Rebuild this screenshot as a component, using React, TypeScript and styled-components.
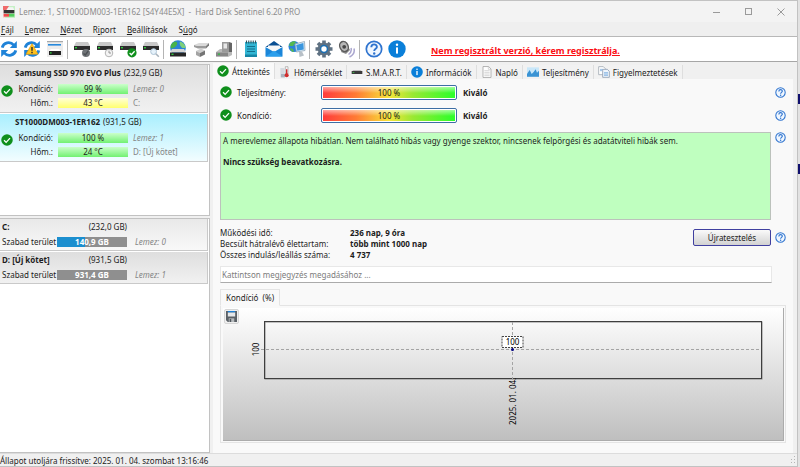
import React from "react";
import styled, { createGlobalStyle } from "styled-components";

const GlobalStyle = createGlobalStyle`
  * { box-sizing: border-box; }
  html, body, #root { margin: 0; padding: 0; }
  body {
    font-family: "Noto Sans", "Open Sans", sans-serif;
    font-size: 8px;
    line-height: 11px;
    color: #1c1c1c;
    background: #efefef;
  }
  button, input { font: inherit; color: inherit; margin: 0; }
  p, h2, h3, dl, dd { margin: 0; }
`;

const Desktop = styled.div`
  display: flex;
  min-height: 100vh;
`;

const BehindWindow = styled.div`
  flex: 0 0 2px;
  display: flex;
  flex-direction: column;
  gap: 60px;
  padding-top: 94px;
  background: #e2e2e2;
`;

const BehindMark = styled.div`
  height: 10px;
  background: #10106e;
`;

const Window = styled.div`
  flex: 1;
  min-width: 0;
  display: flex;
  flex-direction: column;
  border: solid #c2c2c2;
  border-width: 1px 1px 1px 0;
  background: #f0f0f0;
`;

const TitleBar = styled.header`
  display: flex;
  align-items: center;
  gap: 4px;
  height: 21px;
  padding-left: 3px;
  background: #f3f3f3;
`;

const TitleText = styled.span`
  flex: 1;
  color: #8c8c8c;
  white-space: pre;
`;

const CaptionButton = styled.button`
  width: 32px;
  height: 20px;
  margin-right: 0;
  padding: 0;
  border: 0;
  background: none;
  color: #9a9a9a;
  display: grid;
  place-items: center;
  & + & { margin-left: -4px; }
`;

const MenuBar = styled.nav`
  display: flex;
  align-items: center;
  gap: 9px;
  height: 15px;
  border-bottom: 1px solid #b8b8b8;
  background: #efefef;
`;

const MenuItem = styled.button`
  padding: 0 1px;
  border: 0;
  background: none;
  line-height: 11px;
`;

const Toolbar = styled.div`
  display: flex;
  align-items: center;
  height: 25px;
  border-bottom: 1px solid #a6a6a6;
  background: #fff;
`;

const ToolButton = styled.button`
  flex: 0 0 auto;
  width: 23px;
  height: 22px;
  padding: 0;
  border: 0;
  background: none;
  display: flex;
  align-items: center;
  svg { width: 18px; height: 18px; }
`;

const ToolSeparator = styled.div`
  width: 1px;
  height: 19px;
  margin: 0 5px 0 -2px;
  background: #b4b4b4;
`;

const RegisterLink = styled.a`
  margin-left: 20px;
  padding-top: 3px;
  font-size: 9px;
  font-weight: 700;
  color: #fb0d12;
  text-decoration: underline;
  white-space: nowrap;
`;

const Main = styled.main`
  flex: 1;
  display: flex;
  border-bottom: 1px solid #dcdcdc;
`;

const Sidebar = styled.aside`
  flex: 0 0 210px;
  display: flex;
  flex-direction: column;
  gap: 2px;
  padding-top: 2px;
`;

const SidePane = styled.section<{ $fixed?: boolean }>`
  flex: ${(p) => (p.$fixed ? "0 0 152px" : "1")};
  display: flex;
  flex-direction: column;
  gap: 1px;
  border: solid #c2c2c2;
  border-width: 1px 1px 1px 0;
  background: #fff;
  padding-right: 1px;
`;

const Card = styled.article<{ $tone?: "blue" | "light" }>`
  border: solid #c9c9c9;
  border-width: 0 1px 1px 0;
  background: ${(p) =>
    p.$tone === "blue"
      ? "linear-gradient(#a9effe, #f2fdff)"
      : p.$tone === "light"
      ? "linear-gradient(#e9e9e9, #f8f8f8)"
      : "linear-gradient(#dedede, #f1f1f1)"};
`;

const DiskCard = styled(Card)`
  height: 48px;
  padding: 2px 0 0 15px;
`;

const CardTitle = styled.h3`
  display: flex;
  gap: 3px;
  font-size: 8px;
  line-height: 11px;
  font-weight: 700;
  white-space: nowrap;
`;

const Capacity = styled.span`
  font-weight: 400;
`;

const DiskBody = styled.div`
  display: flex;
  align-items: center;
  gap: 2px;
  margin-left: -14px;
  padding-top: 5px;
  > svg { flex: 0 0 12px; margin-top: -10px; }
`;

const DiskLines = styled.div`
  display: grid;
  grid-template-columns: 38px 70px 1fr;
  column-gap: 5px;
  row-gap: 3px;
  align-items: center;
`;

const LineLabel = styled.span`
  text-align: right;
  white-space: nowrap;
`;

const Meter = styled.div<{ $warm?: boolean }>`
  height: 10px;
  line-height: 10px;
  text-align: center;
  background: ${(p) =>
    p.$warm ? "linear-gradient(#ffffd8, #ffff6e)" : "linear-gradient(#cbffcb, #72f172)"};
`;

const Hint = styled.span<{ $italic?: boolean }>`
  color: #858585;
  font-style: ${(p) => (p.$italic ? "italic" : "normal")};
  white-space: nowrap;
`;

const DriveCard = styled(Card)`
  height: 32px;
  padding: 2px 0 0 2px;
  display: grid;
  grid-template-columns: 55px 70px 1fr;
  grid-template-rows: 11px 11px;
  row-gap: 4px;
  align-items: center;
`;

const DriveName = styled.h3`
  font-size: 8px;
  font-weight: 700;
  white-space: nowrap;
`;

const DriveSize = styled.span`
  grid-column: 2 / 3;
  text-align: right;
`;

const SpaceBar = styled.div<{ $used: number }>`
  height: 10px;
  line-height: 10px;
  color: #fff;
  font-weight: 700;
  text-align: center;
  background: linear-gradient(
    90deg,
    #1c8fcf ${(p) => p.$used}%,
    #8f8f8f ${(p) => p.$used}%
  );
`;

const DriveDisk = styled(Hint)`
  padding-left: 8px;
`;

const Content = styled.section`
  flex: 1;
  min-width: 0;
  margin: 1px 4px 0 3px;
  display: flex;
  flex-direction: column;
`;

const TabBar = styled.div`
  display: flex;
  align-items: flex-end;
  height: 16px;
`;

const Tab = styled.button<{ $active?: boolean }>`
  display: flex;
  align-items: center;
  gap: 3px;
  height: ${(p) => (p.$active ? "16px" : "14px")};
  padding: 0 4px;
  border: 0;
  border-right: 1px solid #dedede;
  background: ${(p) => (p.$active ? "#f9f9f9" : "#f2f2f2")};
  white-space: nowrap;
  svg { width: 12px; height: 12px; }
`;

const Page = styled.div`
  flex: 1;
  display: flex;
  flex-direction: column;
  padding: 6px 7px 10px 7px;
  background: #f9f9f9;
`;

const StatusRow = styled.div`
  display: flex;
  align-items: center;
  height: 14px;
  margin-bottom: 9px;
`;

const StatusName = styled.span`
  width: 89px;
  padding-left: 5px;
`;

const RatingBar = styled.div`
  width: 136px;
  height: 15px;
  padding: 1px;
  border: 1px solid #3d6ea4;
  border-radius: 2px;
  background: #fff;
`;

const RatingFill = styled.div`
  height: 11px;
  line-height: 11px;
  text-align: center;
  background:
    linear-gradient(rgba(255, 255, 255, 0.55), rgba(255, 255, 255, 0) 55%),
    linear-gradient(90deg, #ff3b3b, #ff7b35 25%, #f7e53a 50%, #9ae833 68%, #2bff2b);
`;

const Rating = styled.strong`
  flex: 1;
  padding-left: 6px;
`;

const HelpButton = styled.button`
  flex: 0 0 11px;
  width: 11px;
  height: 11px;
  padding: 0;
  border: 0;
  background: none;
  display: block;
  svg { display: block; width: 11px; height: 11px; }
`;

const WithHelp = styled.div`
  display: flex;
  align-items: flex-start;
  gap: 4px;
  padding-top: 1px;
`;

const Description = styled.div`
  flex: 1;
  height: 88px;
  padding: 2px;
  border: 1px solid #bcc2bc;
  background: #bfffbf;
  line-height: 11px;
`;

const Verdict = styled.p`
  padding-top: 10px;
  font-weight: 700;
`;

const Summary = styled.div`
  display: flex;
  align-items: flex-start;
  gap: 4px;
  margin-top: 7px;
  > button:last-child { margin-top: 5px; }
`;

const Facts = styled.dl`
  flex: 1;
  display: grid;
  grid-template-columns: 130px 1fr;
  align-content: start;
  line-height: 11px;
  dd { font-weight: 700; }
`;

const RetestButton = styled.button`
  width: 78px;
  height: 17px;
  margin-top: 2px;
  padding: 0;
  border: 1px solid #4040a0;
  border-radius: 2px;
  background: linear-gradient(#fafafa, #d2d2d2);
`;

const NoteInput = styled.input`
  width: calc(100% - 14px);
  height: 17px;
  margin-top: 6px;
  padding: 0 1px;
  border: 1px solid #e8e8e8;
  border-bottom-color: #ababab;
  background: #fff;
  outline: 0;
  &::placeholder { color: #7c7c7c; opacity: 1; }
`;

const ChartTab = styled.button`
  align-self: flex-start;
  height: 17px;
  margin: 6px 0 -1px;
  padding: 0 5px;
  border: 1px solid #e4e4e4;
  border-bottom-color: #f9f9f9;
  background: #f9f9f9;
  white-space: pre;
  z-index: 1;
`;

const ChartFrame = styled.div`
  flex: 1;
  display: flex;
  padding: 2px 1px 1px 2px;
  border: 1px solid #e4e4e4;
`;

const ChartArea = styled.div`
  flex: 1;
  display: flex;
  gap: 25px;
  padding: 1px 22px 0 1px;
  border: solid #ababab;
  border-width: 0 1px 1px 0;
  background: linear-gradient(#fff, #bfbfbf);
`;

const SaveButton = styled.button`
  flex: 0 0 15px;
  width: 15px;
  height: 15px;
  padding: 1px;
  border: 1px solid #d6d6d6;
  border-radius: 2px;
  background: #efefef;
  display: block;
  svg { display: block; width: 11px; height: 11px; }
`;

const Plot = styled.svg`
  flex: 1;
  min-width: 0;
  height: 116px;
  margin-top: 12px;
  overflow: visible;
  font-size: 8px;
`;

const StatusBar = styled.footer`
  display: flex;
  align-items: center;
  justify-content: space-between;
  height: 12px;
`;

const DiskShape = () => (
  <g>
    <path d="M3 2h12l2 4H1z" fill="#c9c9c9" />
    <rect x="1" y="6" width="16" height="4" fill="#2c2c2c" />
    <rect x="2" y="7" width="2" height="1.400" fill="#2fc83c" />
  </g>
);

const Svg = ({ children, size = 18 }: { children: React.ReactNode; size?: number }) => (
  <svg width={size} height={size} viewBox="0 0 18 18" aria-hidden="true">
    {children}
  </svg>
);

const CheckIcon = ({ size = 12 }: { size?: number }) => (
  <Svg size={size}>
    <circle cx="9" cy="9" r="8.600" fill="#0f8f1c" />
    <path d="M4.600 9.400l3.100 3.200 5.800-6.400" fill="none" stroke="#fff" strokeWidth="2" />
  </Svg>
);

const HelpIcon = () => (
  <Svg>
    <circle cx="9" cy="9" r="7.700" fill="#f0f7ff" stroke="#2f74cf" strokeWidth="1.700" />
    <path
      d="M6.300 7.200c0-3.800 5.600-3.600 5.600-.3 0 1.900-2.700 2-2.700 4.200"
      fill="none"
      stroke="#2f74cf"
      strokeWidth="1.900"
    />
    <circle cx="9.200" cy="13.500" r="1.200" fill="#2f74cf" />
  </Svg>
);

const InfoIcon = () => (
  <Svg>
    <circle cx="9" cy="9" r="8.700" fill="#0a7fd9" />
    <rect x="8" y="7.400" width="2" height="6.200" fill="#fff" />
    <circle cx="9" cy="4.800" r="1.200" fill="#fff" />
  </Svg>
);

const Arrows = () => (
  <g fill="none" stroke="#1f83d8" strokeWidth="2.800">
    <path d="M2.200 7.600C3.400 2.600 10 .9 13.800 5.100" />
    <path d="M15.800 10.400C14.600 15.400 8 17.100 4.200 12.900" />
    <path d="M16.800 1v7h-7z" fill="#1f83d8" stroke="none" />
    <path d="M1.200 17v-7h7z" fill="#1f83d8" stroke="none" />
  </g>
);

const RefreshIcon = () => (
  <Svg>
    <Arrows />
  </Svg>
);

const RefreshWarnIcon = () => (
  <Svg>
    <Arrows />
    <path d="M9 3.600l6 10.600H3z" fill="#ffc31f" stroke="#e79b00" strokeWidth=".6" />
    <path d="M9 7v3.800M9 11.800v1.400" stroke="#2a2a2a" strokeWidth="1.400" />
  </Svg>
);

const ViewIcon = () => (
  <Svg>
    <rect x="1" y="1" width="16" height="16" fill="#ececec" />
    <rect x="1" y="1" width="16" height="1.200" fill="#a9a9a9" />
    <rect x="2" y="4" width="13" height="1.600" fill="#2789dc" />
    <path d="M5 9h8l2 2H3z" fill="#fff" />
    <rect x="3" y="11" width="12" height="4" fill="#222" />
    <rect x="4" y="12.200" width="1.600" height="1.400" fill="#2fc83c" />
  </Svg>
);

const DiskGearIcon = () => (
  <Svg>
    <DiskShape />
    <circle cx="13" cy="13" r="4" fill="#6f7377" />
    <path d="M10.500 13.400l1.800 1.600 3-4" fill="none" stroke="#4b4f53" strokeWidth="1.300" />
  </Svg>
);

const DiskClockIcon = () => (
  <Svg>
    <DiskShape />
    <circle cx="13" cy="13" r="3.800" fill="#f4f4f4" stroke="#b4b4b4" strokeWidth="1" />
    <path d="M13 10.600V13h2" fill="none" stroke="#8b8b8b" strokeWidth=".9" />
  </Svg>
);

const DiskCheckIcon = () => (
  <Svg>
    <DiskShape />
    <circle cx="13" cy="12.800" r="4.600" fill="#0f8f1c" />
    <path d="M10.600 13l1.800 1.800 3.200-3.600" fill="none" stroke="#fff" strokeWidth="1.300" />
  </Svg>
);

const DiskSearchIcon = () => (
  <Svg>
    <DiskShape />
    <circle cx="11.600" cy="11.600" r="2.900" fill="#e6f2fb" stroke="#adc4d6" strokeWidth="1" />
    <path d="M13.800 13.800l3 3" stroke="#a7b2bb" strokeWidth="1.600" />
  </Svg>
);

const GlobeDiskIcon = () => (
  <Svg>
    <circle cx="9" cy="8" r="7.800" fill="#2b83d8" />
    <path d="M4 2.400c3-2 5 0 4 2S5 8 2 8.600C1 6 2 4 4 2.400z" fill="#48b34a" />
    <path d="M11 1.600c4 1.400 5.500 4 5.500 6.400h-3c-2-1-3.500-4-2.500-6.400z" fill="#7fd07a" />
    <path d="M3 9h12l2 3.500H1z" fill="#d6d6d6" />
    <rect x="1" y="12.500" width="16" height="4" fill="#262626" />
    <rect x="2.500" y="13.600" width="2" height="1.400" fill="#2fc83c" />
  </Svg>
);

const CableIcon = () => (
  <Svg>
    <path d="M2 5l5-2h10l-3 3H5z" fill="#dadada" />
    <path d="M2 5l3 1h9v2.500H6L2 7z" fill="#9b9b9b" />
    <path d="M14 6l3-3v2.500l-3 3z" fill="#7a7a7a" />
    <path d="M4 11l5-2.500 4 2-5 2.500z" fill="#cfcfcf" />
    <path d="M4 11l4 2v4l-4-2z" fill="#a4a4a4" />
    <path d="M8 13l5-2.500v4L8 17z" fill="#747474" />
  </Svg>
);

const DockIcon = () => (
  <Svg>
    <path d="M7 2h7v10H7z" fill="#9a9a9a" />
    <path d="M8.500 3.500h3.500v5H8.500z" fill="#e8e8e8" />
    <path d="M14 2l3 1v9h-3z" fill="#656565" />
    <path d="M1 12l4-3h2v3h10v3l-4 2H1z" fill="#b9b9b9" />
    <path d="M1 12.500h12V16H1z" fill="#878787" />
    <rect x="3" y="13.500" width="2" height="1.400" fill="#38b84a" />
  </Svg>
);

const NotesIcon = () => (
  <Svg>
    <rect x="3" y="2" width="12" height="15" fill="#32b5d3" />
    <path d="M3 14.500h12V17H3z" fill="#1686a6" />
    <path d="M4.500.5v3M6.750.5v3M9 .5v3M11.250.5v3M13.500.5v3" stroke="#2c5560" strokeWidth="1.100" />
    <path d="M5 6.500h8M5 9h8M5 11.500h8" stroke="#12718d" strokeWidth="1.100" />
  </Svg>
);

const MailIcon = () => (
  <Svg>
    <path d="M.5 7L9 1l8.500 6z" fill="#0a4f92" />
    <path d="M3 5.500h12V12H3z" fill="#f7f7f7" />
    <path d="M.5 7L9 12l8.500-5v9.500H.5z" fill="#1b86d9" />
    <path d="M.5 16.500L9 10.800l8.500 5.700z" fill="#2b9fec" />
  </Svg>
);

const NetworkIcon = () => (
  <Svg>
    <circle cx="6" cy="6.500" r="5.500" fill="#2b83d8" />
    <path d="M2 3c2-2 5-2 6-1L5 6H1z" fill="#55b84f" />
    <path d="M2 8l3 1 1 3c-2 0-4-2-4-4z" fill="#55b84f" />
    <path d="M7 4l9.500-2.500.5 9-8.500 1.500z" fill="#dceefa" stroke="#8fa6b9" strokeWidth=".8" />
    <path d="M8.200 5l7.200-1.900.4 6.500-6.500 1.200z" fill="#3b96de" />
    <path d="M11 12l3-.5 2 4-4.500 1.500z" fill="#b8c0c7" />
  </Svg>
);

const GearIcon = () => (
  <Svg>
    <path d="M9 .5v17M.5 9h17M3 3l12 12M15 3L3 15" stroke="#5f7182" strokeWidth="3.600" />
    <circle cx="9" cy="9" r="6.400" fill="#5f7182" />
    <circle cx="9" cy="9" r="4.200" fill="#1d70b4" />
    <circle cx="9" cy="9" r="2.700" fill="#fff" />
  </Svg>
);

const SpeakerIcon = () => (
  <Svg>
    <path d="M7 1l5 9-4 4-5-2z" fill="#8c8c8c" />
    <ellipse cx="6" cy="6.500" rx="4.800" ry="6" transform="rotate(-25 6 6.500)" fill="#5c5c5c" />
    <ellipse cx="6" cy="6.500" rx="3.400" ry="4.500" transform="rotate(-25 6 6.500)" fill="#b7b7b7" />
    <circle cx="6.200" cy="6.800" r="1.900" fill="#474747" />
    <path
      d="M13 8c1 3-.5 5-2.500 6.500M16 8.500c1 4-1.500 7-4.500 8.500"
      fill="none"
      stroke="#aaa6cf"
      strokeWidth="1.500"
    />
  </Svg>
);

const AppIcon = () => (
  <Svg size={12}>
    <path d="M0 0h11L4 18H0z" fill="#f9d6d6" />
    <path d="M8 0h10v18H3z" fill="#c5f0c5" />
    <path d="M2 6l1-4h12l2 4z" fill="#f4f4f4" />
    <path d="M0 0h9L5 6H0z" fill="#ef6a6a" />
    <rect x="1" y="6" width="16" height="5" fill="#333" />
    <rect x="1" y="12" width="8" height="4" fill="#ef4a4a" />
    <rect x="9" y="12" width="8" height="4" fill="#54cf5d" />
  </Svg>
);

const ThermometerIcon = () => (
  <Svg>
    <path d="M2 3h6v14H2z" fill="#d5dae0" />
    <path d="M3 12h6v5H3z" fill="#a9b2bc" />
    <path d="M9.500 1h4v11h-4z" fill="#f4f4f4" stroke="#8d8d8d" strokeWidth=".8" />
    <path d="M10.500 5h2v8h-2z" fill="#d12e2e" />
    <circle cx="11.500" cy="14" r="3" fill="#d12e2e" />
  </Svg>
);

const SmartIcon = () => (
  <Svg>
    <path d="M2 7.500L3.500 6h11L16 7.500z" fill="#bdbdbd" />
    <rect x="1" y="7.500" width="16" height="4.500" fill="#3b3b3b" />
    <rect x="2.500" y="9" width="2.500" height="1.500" fill="#3fae4a" />
  </Svg>
);

const PageIcon = () => (
  <Svg>
    <path d="M3 .8h8.500L15 4.500v12.700H3z" fill="#fff" stroke="#a2a2a2" strokeWidth="1.200" />
    <path d="M11 1v4h4M5 7h8M5 9.500h8M5 12h8M5 14.500h8" fill="none" stroke="#c1c1c1" strokeWidth="1" />
  </Svg>
);

const GraphIcon = () => (
  <Svg>
    <rect x="0" y="2" width="18" height="14" fill="#c9e7f9" />
    <path d="M0 16v-4l4-6 3 6 3-3 3-4 2 5 3-3v9z" fill="#3a93d4" />
  </Svg>
);

const CopyIcon = () => (
  <Svg>
    <path d="M1 1h7l3 3v9H1z" fill="#fff" stroke="#9fa8b2" strokeWidth="1.200" />
    <path d="M7 5h7l3 3v9H7z" fill="#eef5fc" stroke="#8b9bae" strokeWidth="1.200" />
    <path d="M9 10h6M9 12h6M9 14h6M3 5h4M3 7h3" stroke="#6da4dc" strokeWidth="1.100" />
  </Svg>
);

const FloppyIcon = () => (
  <Svg>
    <path d="M0 0h18v18H3l-3-3z" fill="#5a6066" />
    <rect x="3" y="0" width="12" height="2.500" fill="#1b7fd6" />
    <rect x="3" y="2.500" width="12" height="6.500" fill="#e4e6e8" />
    <rect x="4.500" y="12" width="9" height="6" fill="#b6babd" />
    <rect x="6" y="13" width="2.500" height="5" fill="#50565c" />
  </Svg>
);

const menus: [string, string, string][] = [
  ["", "F", "ájl"],
  ["", "L", "emez"],
  ["", "N", "ézet"],
  ["R", "i", "port"],
  ["", "B", "eállítások"],
  ["S", "ú", "gó"],
];

const toolGroups: [string, React.FC][][] = [
  [["Frissítés", RefreshIcon], ["Figyelmeztetés frissítése", RefreshWarnIcon], ["Nézet", ViewIcon]],
  [
    ["Lemez teszt", DiskGearIcon],
    ["Ütemezett teszt", DiskClockIcon],
    ["Lemez ellenőrzése", DiskCheckIcon],
    ["Felület vizsgálata", DiskSearchIcon],
  ],
  [["Online", GlobeDiskIcon], ["Csatlakozás", CableIcon], ["Dokkoló", DockIcon]],
  [["Riport", NotesIcon], ["Levél", MailIcon], ["Hálózat", NetworkIcon]],
  [["Beállítások", GearIcon], ["Hang", SpeakerIcon]],
  [["Súgó", HelpIcon], ["Névjegy", InfoIcon]],
];

const tabs: [string, React.FC][] = [
  ["Áttekintés", CheckIcon],
  ["Hőmérséklet", ThermometerIcon],
  ["S.M.A.R.T.", SmartIcon],
  ["Információk", InfoIcon],
  ["Napló", PageIcon],
  ["Teljesítmény", GraphIcon],
  ["Figyelmeztetések", CopyIcon],
];

const Help = () => (
  <HelpButton aria-label="Súgó">
    <HelpIcon />
  </HelpButton>
);

type DiskProps = {
  name: string;
  size: string;
  health: string;
  temp: string;
  warm?: boolean;
  index: number;
  volume: string;
  selected?: boolean;
};

const Disk = ({ name, size, health, temp, warm, index, volume, selected }: DiskProps) => (
  <DiskCard $tone={selected ? "blue" : undefined}>
    <CardTitle>
      {name} <Capacity>({size})</Capacity>
    </CardTitle>
    <DiskBody>
      <CheckIcon />
      <DiskLines>
        <LineLabel>Kondíció:</LineLabel>
        <Meter>{health}</Meter>
        <Hint $italic>Lemez: {index}</Hint>
        <LineLabel>Hőm.:</LineLabel>
        <Meter $warm={warm}>{temp}</Meter>
        <Hint>{volume}</Hint>
      </DiskLines>
    </DiskBody>
  </DiskCard>
);

type DriveProps = { name: string; size: string; free: string; used: number; index: number; light?: boolean };

const Drive = ({ name, size, free, used, index, light }: DriveProps) => (
  <DriveCard $tone={light ? "light" : undefined}>
    <DriveName>{name}</DriveName>
    <DriveSize>({size})</DriveSize>
    <span />
    <span>Szabad terület</span>
    <SpaceBar $used={used}>{free}</SpaceBar>
    <DriveDisk $italic>Lemez: {index}</DriveDisk>
  </DriveCard>
);

const StatusLine = ({ name }: { name: string }) => (
  <StatusRow>
    <CheckIcon />
    <StatusName>{name}</StatusName>
    <RatingBar>
      <RatingFill>100 %</RatingFill>
    </RatingBar>
    <Rating>Kiváló</Rating>
    <Help />
  </StatusRow>
);

const HealthPlot = () => (
  <Plot role="img" aria-label="Kondíció (%)">
    <rect x="1" y="1" width="100%" height="57" fill="none" stroke="#888" />
    <rect x="0.5" y="0.5" width="100%" height="57" fill="none" stroke="#3e3e3e" />
    <line x1="-3" x2="100%" y1="28.500" y2="28.500" stroke="#a4a4a4" strokeDasharray="3 2" />
    <line x1="50%" x2="50%" y1="1" y2="60" stroke="#a4a4a4" strokeDasharray="3 2" />
    <text transform="translate(-5 28.500) rotate(-90)" textAnchor="middle">100</text>
    <svg x="50%" overflow="visible">
      <rect x="-10.500" y="15.500" width="21" height="11" fill="#fff" stroke="#444" strokeDasharray="2 1" />
      <text x="0" y="24" textAnchor="middle">100</text>
      <circle cx="0" cy="28.500" r="1.500" fill="#000080" />
      <text transform="translate(3 104) rotate(-90)">2025. 01. 04.</text>
    </svg>
  </Plot>
);

export default function App() {
  return (
    <Desktop>
      <GlobalStyle />
      <Window>
        <TitleBar>
          <AppIcon />
          <TitleText>{"Lemez: 1, ST1000DM003-1ER162 [S4Y44E5X]  -  Hard Disk Sentinel 6.20 PRO"}</TitleText>
          <CaptionButton aria-label="Kis méret">
            <svg width="8" height="8"><path d="M0 4.500h7" stroke="currentColor" /></svg>
          </CaptionButton>
          <CaptionButton aria-label="Teljes méret">
            <svg width="8" height="8"><rect x=".5" y=".5" width="6" height="6" fill="none" stroke="currentColor" /></svg>
          </CaptionButton>
          <CaptionButton aria-label="Bezárás">
            <svg width="8" height="8"><path d="M.5.5l7 7M7.500.5l-7 7" stroke="currentColor" /></svg>
          </CaptionButton>
        </TitleBar>
        <MenuBar>
          {menus.map(([before, key, after]) => (
            <MenuItem key={after}>{before}<u>{key}</u>{after}</MenuItem>
          ))}
        </MenuBar>
        <Toolbar>
          {toolGroups.map((group, i) => (
            <React.Fragment key={i}>
              {i > 0 && <ToolSeparator />}
              {group.map(([label, Icon]) => (
                <ToolButton key={label} aria-label={label}><Icon /></ToolButton>
              ))}
            </React.Fragment>
          ))}
          <RegisterLink href="#register">Nem regisztrált verzió, kérem regisztrálja.</RegisterLink>
        </Toolbar>
        <Main>
          <Sidebar>
            <SidePane $fixed>
              <Disk name="Samsung SSD 970 EVO Plus" size="232,9 GB" health="99 %" temp="43 °C" warm index={0} volume="C:" />
              <Disk name="ST1000DM003-1ER162" size="931,5 GB" health="100 %" temp="24 °C" index={1} volume="D: [Új kötet]" selected />
            </SidePane>
            <SidePane>
              <Drive name="C:" size="232,0 GB" free="140,9 GB" used={40} index={0} light />
              <Drive name="D: [Új kötet]" size="931,5 GB" free="931,4 GB" used={0} index={1} />
            </SidePane>
          </Sidebar>
          <Content>
            <TabBar role="tablist">
              {tabs.map(([label, Icon], i) => (
                <Tab key={label} role="tab" aria-selected={i === 0} $active={i === 0}>
                  <Icon />{label}
                </Tab>
              ))}
            </TabBar>
            <Page>
              <StatusLine name="Teljesítmény:" />
              <StatusLine name="Kondíció:" />
              <WithHelp>
                <Description>
                  <p>A merevlemez állapota hibátlan. Nem található hibás vagy gyenge szektor, nincsenek felpörgési és adatátviteli hibák sem.</p>
                  <Verdict>Nincs szükség beavatkozásra.</Verdict>
                </Description>
                <Help />
              </WithHelp>
              <Summary>
                <Facts>
                  <dt>Működési idő:</dt><dd>236 nap, 9 óra</dd>
                  <dt>Becsült hátralévő élettartam:</dt><dd>több mint 1000 nap</dd>
                  <dt>Összes indulás/leállás száma:</dt><dd>4 737</dd>
                </Facts>
                <RetestButton>Újratesztelés</RetestButton>
                <Help />
              </Summary>
              <NoteInput aria-label="Megjegyzés" placeholder="Kattintson megjegyzés megadásához ..." />
              <ChartTab>{"Kondíció  (%)"}</ChartTab>
              <ChartFrame>
                <ChartArea>
                  <SaveButton aria-label="Mentés"><FloppyIcon /></SaveButton>
                  <HealthPlot />
                </ChartArea>
              </ChartFrame>
            </Page>
          </Content>
        </Main>
        <StatusBar>
          <span>Állapot utoljára frissítve: 2025. 01. 04. szombat 13:16:46</span>
          <svg width="8" height="8" fill="#b5b5b5" aria-hidden="true">
            <path d="M5 0h1v1H5zM5 3h1v1H5zM5 6h1v1H5zM2 3h1v1H2zM2 6h1v1H2z" />
          </svg>
        </StatusBar>
      </Window>
      <BehindWindow>
        <BehindMark />
        <BehindMark />
      </BehindWindow>
    </Desktop>
  );
}
